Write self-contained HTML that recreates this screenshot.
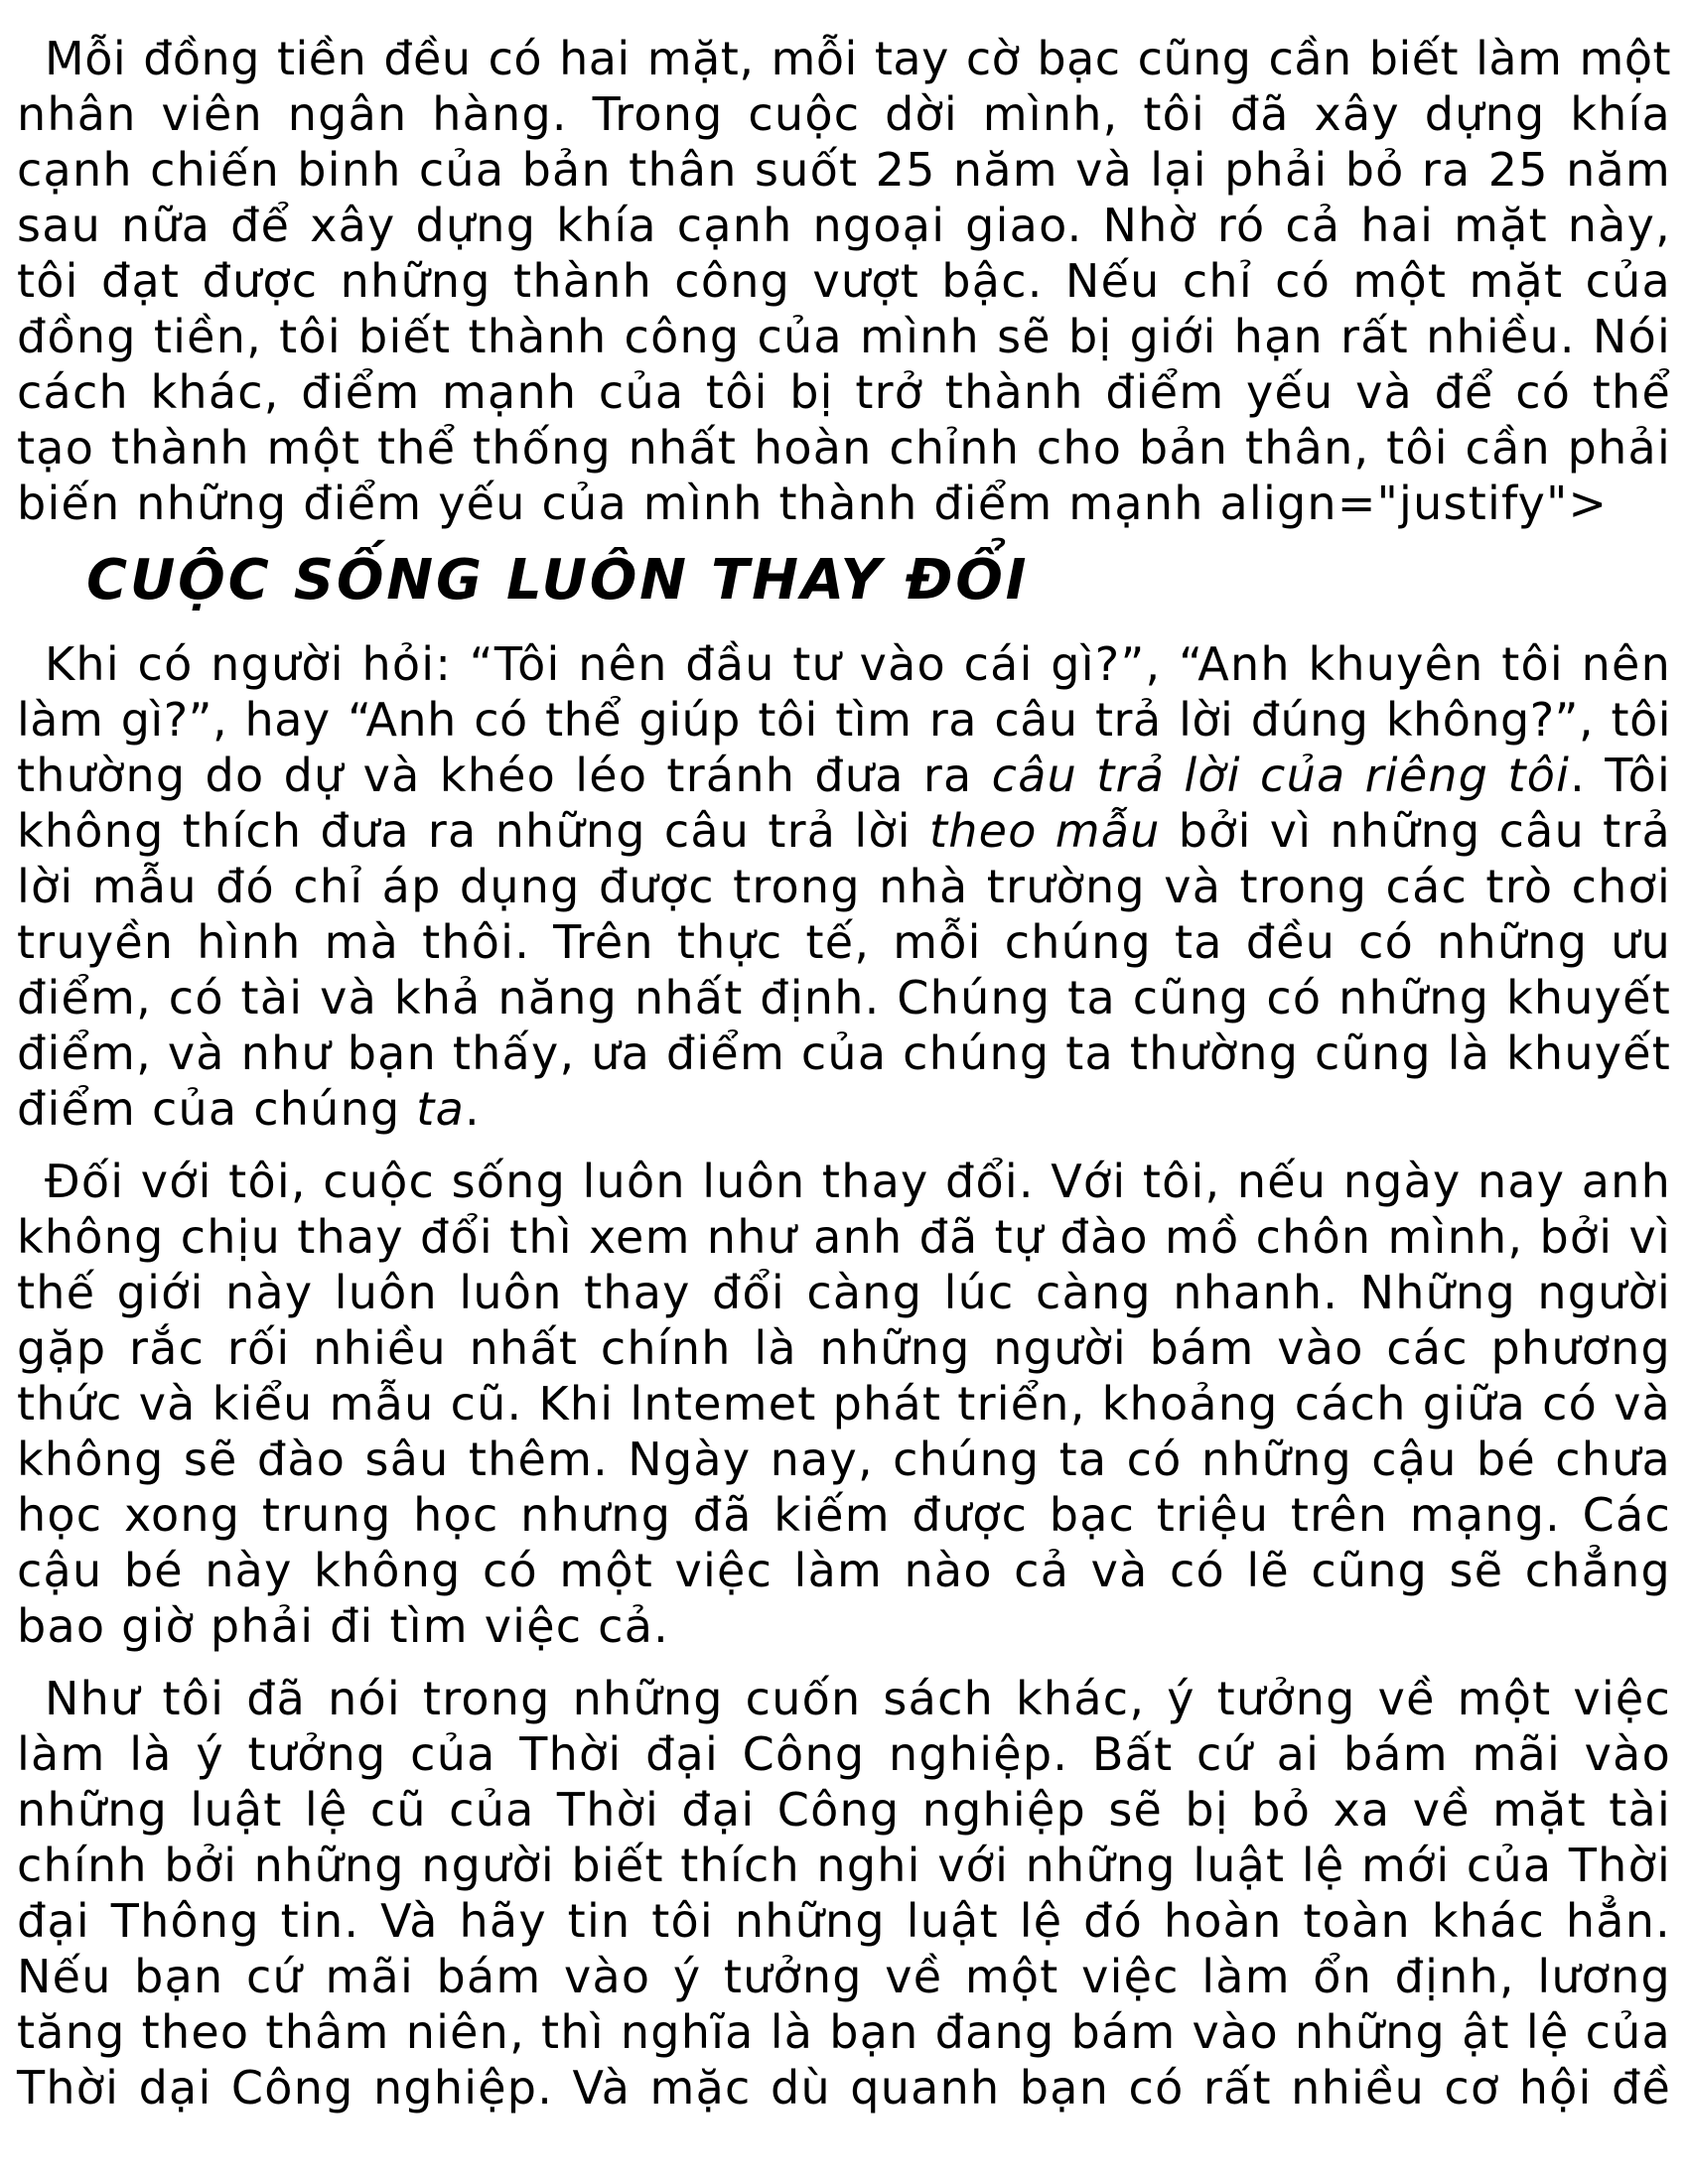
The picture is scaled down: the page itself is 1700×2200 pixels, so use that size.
<!DOCTYPE html>
<html><head><meta charset="utf-8">
<style>
html,body{margin:0;padding:0;background:#fff;}
body{width:1700px;height:2200px;overflow:hidden;font-family:"DejaVu Sans","Liberation Sans",sans-serif;color:#000;}
.wrap{position:absolute;left:17px;width:1666px;}
.p span{display:block;height:56px;line-height:56px;font-size:46px;letter-spacing:1.25px;white-space:nowrap;text-align:justify;text-align-last:justify;}
.p span.l{text-align-last:left;}
.p span.f{padding-left:28px;}
.p span.t{letter-spacing:0.5px;}
h1{position:absolute;left:87px;top:553px;margin:0;height:64px;line-height:64px;font-size:56px;letter-spacing:2.8px;font-weight:bold;font-style:italic;white-space:nowrap;}
</style></head><body>
<div class="wrap p" style="top:31px">
<span class="f t">Mỗi đồng tiền đều có hai mặt, mỗi tay cờ bạc cũng cần biết làm một</span>
<span>nhân viên ngân hàng. Trong cuộc dời mình, tôi đã xây dựng khía</span>
<span>cạnh chiến binh của bản thân suốt 25 năm và lại phải bỏ ra 25 năm</span>
<span>sau nữa để xây dựng khía cạnh ngoại giao. Nhờ ró cả hai mặt này,</span>
<span>tôi đạt được những thành công vượt bậc. Nếu chỉ có một mặt của</span>
<span>đồng tiền, tôi biết thành công của mình sẽ bị giới hạn rất nhiều. Nói</span>
<span>cách khác, điểm mạnh của tôi bị trở thành điểm yếu và để có thể</span>
<span>tạo thành một thể thống nhất hoàn chỉnh cho bản thân, tôi cần phải</span>
<span class="l">biến những điểm yếu của mình thành điểm mạnh align="justify"&gt;</span>
</div>
<h1>CUỘC SỐNG LUÔN THAY ĐỔI</h1>
<div class="wrap p" style="top:641px">
<span class="f">Khi có người hỏi: “Tôi nên đầu tư vào cái gì?”, “Anh khuyên tôi nên</span>
<span class="t">làm gì?”, hay “Anh có thể giúp tôi tìm ra câu trả lời đúng không?”, tôi</span>
<span>thường do dự và khéo léo tránh đưa ra <i>câu trả lời của riêng tôi</i>. Tôi</span>
<span>không thích đưa ra những câu trả lời <i>theo mẫu</i> bởi vì những câu trả</span>
<span>lời mẫu đó chỉ áp dụng được trong nhà trường và trong các trò chơi</span>
<span>truyền hình mà thôi. Trên thực tế, mỗi chúng ta đều có những ưu</span>
<span>điểm, có tài và khả năng nhất định. Chúng ta cũng có những khuyết</span>
<span>điểm, và như bạn thấy, ưa điểm của chúng ta thường cũng là khuyết</span>
<span class="l">điểm của chúng <i>ta</i>.</span>
</div>
<div class="wrap p" style="top:1162px">
<span class="f">Đối với tôi, cuộc sống luôn luôn thay đổi. Với tôi, nếu ngày nay anh</span>
<span>không chịu thay đổi thì xem như anh đã tự đào mồ chôn mình, bởi vì</span>
<span>thế giới này luôn luôn thay đổi càng lúc càng nhanh. Những người</span>
<span>gặp rắc rối nhiều nhất chính là những người bám vào các phương</span>
<span>thức và kiểu mẫu cũ. Khi lntemet phát triển, khoảng cách giữa có và</span>
<span>không sẽ đào sâu thêm. Ngày nay, chúng ta có những cậu bé chưa</span>
<span>học xong trung học nhưng đã kiếm được bạc triệu trên mạng. Các</span>
<span>cậu bé này không có một việc làm nào cả và có lẽ cũng sẽ chẳng</span>
<span class="l">bao giờ phải đi tìm việc cả.</span>
</div>
<div class="wrap p" style="top:1683px">
<span class="f">Như tôi đã nói trong những cuốn sách khác, ý tưởng về một việc</span>
<span>làm là ý tưởng của Thời đại Công nghiệp. Bất cứ ai bám mãi vào</span>
<span>những luật lệ cũ của Thời đại Công nghiệp sẽ bị bỏ xa về mặt tài</span>
<span>chính bởi những người biết thích nghi với những luật lệ mới của Thời</span>
<span>đại Thông tin. Và hãy tin tôi những luật lệ đó hoàn toàn khác hẳn.</span>
<span>Nếu bạn cứ mãi bám vào ý tưởng về một việc làm ổn định, lương</span>
<span>tăng theo thâm niên, thì nghĩa là bạn đang bám vào những ật lệ của</span>
<span>Thời dại Công nghiệp. Và mặc dù quanh bạn có rất nhiều cơ hội đề</span>
</div>
</body></html>
